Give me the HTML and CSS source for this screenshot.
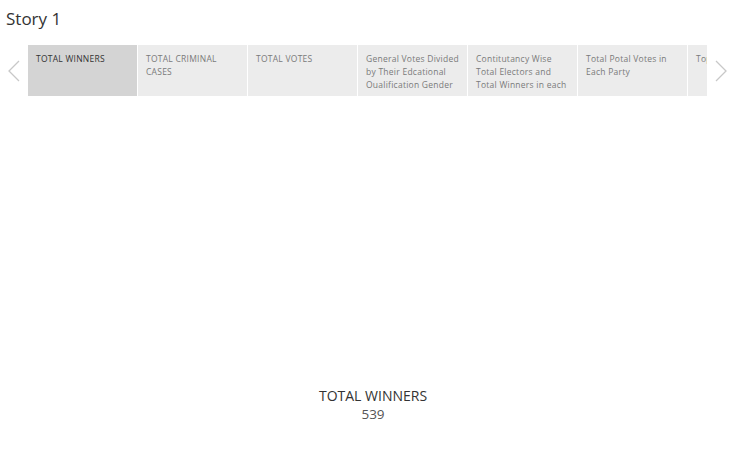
FILE: index.html
```html
<!DOCTYPE html>
<html lang="en">
<head>
    <meta charset="UTF-8">
    <title>Story 1</title>
    <link rel="stylesheet" href="styles.css">
</head>
<body>
    <h1 class="title">Story 1</h1>
    <div class="nav">
        <div class="arrow">
            <svg width="12" height="22" viewBox="0 0 12 22"><path d="M11 1 L1 11 L11 21" fill="none" stroke="#c8c8c8" stroke-width="1.3"/></svg>
        </div>
        <div class="tabs">
            <div class="tab is-active">TOTAL WINNERS</div>
            <div class="tab">TOTAL CRIMINAL CASES</div>
            <div class="tab">TOTAL VOTES</div>
            <div class="tab">General Votes Divided by Their Edcational Oualification Gender</div>
            <div class="tab">Contitutancy Wise Total Electors and Total Winners in each</div>
            <div class="tab">Total Potal Votes in Each Party</div>
            <div class="tab tab-clipped">Top</div>
        </div>
        <div class="arrow">
            <svg width="12" height="22" viewBox="0 0 12 22"><path d="M1 1 L11 11 L1 21" fill="none" stroke="#c8c8c8" stroke-width="1.3"/></svg>
        </div>
    </div>
    <div class="sheet">
        <div class="label">TOTAL WINNERS</div>
        <div class="value">539</div>
    </div>
</body>
</html>
```
FILE: styles.css
```css
body {
    margin: 0;
    font-family: 'Open Sans', 'Lato', sans-serif;
    background: #ffffff;
    color: #333;
    width: 736px;
    height: 454px;
    overflow: hidden;
}
.title {
    margin: 0;
    padding: 8px 0 0 6px;
    font-size: 17px;
    line-height: 22px;
    font-weight: normal;
    color: #333;
    height: 45px;
    box-sizing: border-box;
}
.nav {
    display: flex;
    align-items: center;
    height: 51px;
}
.arrow {
    width: 28px;
    display: flex;
    justify-content: center;
    align-items: center;
}
.tabs {
    display: flex;
    gap: 1px;
    width: 679px;
    overflow: hidden;
    height: 51px;
}
.tab {
    flex: 0 0 109px;
    box-sizing: border-box;
    padding: 7px 8px 0 8px;
    background: #ececec;
    color: #7a7a7a;
    font-size: 8.5px;
    letter-spacing: 0.25px;
    line-height: 13px;
    overflow: hidden;
}
.tab.is-active {
    background: #d4d4d4;
    color: #333;
}
.tab-clipped {
    white-space: nowrap;
}
.sheet {
    margin-top: 290px;
    padding-left: 10px;
    text-align: center;
}
.label {
    font-size: 14px;
    color: #333;
    line-height: 19px;
}
.value {
    font-size: 13.5px;
    color: #555;
    line-height: 19px;
}
```
